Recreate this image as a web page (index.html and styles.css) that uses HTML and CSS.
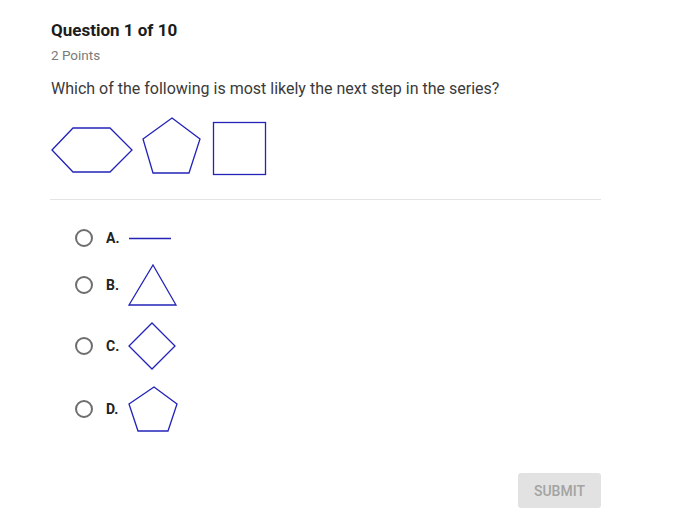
FILE: index.html
```html
<!DOCTYPE html>
<html>
<head>
<meta charset="utf-8">
<link rel="stylesheet" href="styles.css">
</head>
<body>
<div class="quiz">
  <h1 class="title">Question 1 of 10</h1>
  <div class="points">2 Points</div>
  <p class="question">Which of the following is most likely the next step in the series?</p>
  <svg class="series" width="220" height="60" viewBox="0 0 220 60">
    <polygon points="2,34 23,12 60,12 82,34 60,56 23,56"/>
    <polygon points="122,2 150,23 139,57 103,57 93,23"/>
    <rect x="163.5" y="6.5" width="52" height="52"/>
  </svg>
  <div class="divider"></div>
  <div class="options">
    <label class="option">
      <span class="radio"></span>
      <span class="letter">A.</span>
      <svg class="shape" width="44" height="20" viewBox="0 0 44 20"><line x1="1" y1="10.5" x2="43" y2="10.5"/></svg>
    </label>
    <label class="option">
      <span class="radio"></span>
      <span class="letter">B.</span>
      <svg class="shape" width="50" height="42" viewBox="0 0 50 42"><polygon points="25,1 48,41 1,41"/></svg>
    </label>
    <label class="option">
      <span class="radio"></span>
      <span class="letter">C.</span>
      <svg class="shape" width="48" height="48" viewBox="0 0 48 48"><polygon points="24,1 47,24 24,47 1,24"/></svg>
    </label>
    <label class="option">
      <span class="radio"></span>
      <span class="letter">D.</span>
      <svg class="shape" width="50" height="46" viewBox="0 0 50 46"><polygon points="26,1 49,18 40,45 10,45 1,18"/></svg>
    </label>
  </div>
  <div class="actions">
    <button class="submit" disabled>SUBMIT</button>
  </div>
</div>
</body>
</html>
```
FILE: styles.css
```css
html, body {
  margin: 0;
  padding: 0;
  background: #ffffff;
}

body {
  font-family: Roboto, "Liberation Sans", Arial, sans-serif;
  color: #333333;
}

.quiz {
  width: 551px;
  margin-left: 50px;
  padding-top: 20px;
}

.title {
  margin: 0;
  font-size: 17px;
  line-height: 20px;
  font-weight: 700;
  color: #1c1c1c;
  padding-left: 1px;
}

.points {
  margin-top: 7px;
  font-size: 13.5px;
  line-height: 16px;
  color: #7a7a7a;
  padding-left: 1px;
}

.question {
  margin: 16px 0 0 0;
  font-size: 16px;
  line-height: 20px;
  color: #3a3a3a;
  padding-left: 1px;
}

.series {
  display: block;
  margin-top: 17px;
  fill: none;
  stroke: #2323b8;
  stroke-width: 1.3;
}

.divider {
  margin-top: 23px;
  height: 1px;
  background: #e4e4e4;
}

.options {
  display: flex;
  flex-direction: column;
  gap: 16px;
  margin-top: 28px;
  padding-left: 25px;
}

.option {
  display: flex;
  align-items: center;
}

.radio {
  box-sizing: border-box;
  width: 18px;
  height: 18px;
  border: 2px solid #6e6e6e;
  border-radius: 50%;
  flex: none;
}

.letter {
  width: 22px;
  margin-left: 13px;
  font-size: 14px;
  font-weight: 700;
  color: #222222;
  flex: none;
}

.shape {
  display: block;
  flex: none;
  fill: none;
  stroke: #2323b8;
  stroke-width: 1.3;
}

.actions {
  display: flex;
  justify-content: flex-end;
  margin-top: 41px;
}

.submit {
  width: 83px;
  height: 35px;
  border: none;
  border-radius: 3px;
  background: #e2e2e2;
  color: #a3a3a3;
  font-family: Roboto, "Liberation Sans", Arial, sans-serif;
  font-size: 14px;
  font-weight: 500;
  padding: 0;
}
```
